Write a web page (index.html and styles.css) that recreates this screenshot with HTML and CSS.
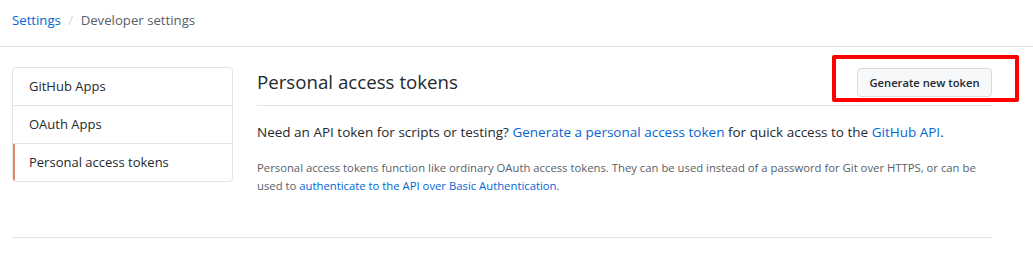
FILE: index.html
```html
<!DOCTYPE html>
<html lang="en">
<head>
  <meta charset="UTF-8">
  <title>Personal access tokens</title>
  <link rel="stylesheet" href="styles.css">
</head>
<body>
  <div class="header">
    <nav class="breadcrumb">
      <a href="#">Settings</a>
      <span class="sep">/</span>
      <span class="current">Developer settings</span>
    </nav>
  </div>

  <div class="layout">
    <ul class="menu">
      <li><a href="#">GitHub Apps</a></li>
      <li><a href="#">OAuth Apps</a></li>
      <li class="selected"><a href="#">Personal access tokens</a></li>
    </ul>

    <div class="main">
      <div class="subhead">
        <h2>Personal access tokens</h2>
        <div class="actions">
          <a href="#" class="btn">Generate new token</a>
          <span class="highlight"></span>
        </div>
      </div>
      <p class="lead">Need an API token for scripts or testing? <a href="#">Generate a personal access token</a> for quick access to the <a href="#">GitHub API</a>.</p>
      <p class="note">Personal access tokens function like ordinary OAuth access tokens. They can be used instead of a password for Git over HTTPS, or can be used to <a href="#">authenticate to the API over Basic Authentication</a>.</p>
    </div>
  </div>

  <div class="footer-rule"></div>
</body>
</html>
```

FILE: styles.css
```css
body {
  font-family: "Open Sans", "Noto Sans", sans-serif;
  font-size: 13.5px;
  margin: 0;
  color: #24292e;
  background: #fff;
}
a {
  color: #0366d6;
  text-decoration: none;
}
.header {
  border-bottom: 1px solid #e1e4e8;
  height: 47px;
  box-sizing: border-box;
  padding: 10px 12px 0;
}
.breadcrumb {
  font-size: 13.2px;
  line-height: 20px;
  color: #586069;
}
.breadcrumb .sep {
  color: #d1d5da;
  margin: 0 4px;
}
.layout {
  display: flex;
  gap: 24px;
  width: 980px;
  margin: 20px 12px 0;
}
.menu {
  list-style: none;
  margin: 0;
  padding: 0;
  width: 221px;
  flex-shrink: 0;
  align-self: flex-start;
  border: 1px solid #e1e4e8;
  border-radius: 4px;
  box-sizing: border-box;
  overflow: hidden;
  font-size: 13px;
}
.menu li {
  border-bottom: 1px solid #e1e4e8;
}
.menu li:last-child {
  border-bottom: 0;
}
.menu a {
  display: block;
  padding: 0 16px;
  height: 37px;
  line-height: 37px;
  color: #24292e;
}
.menu .selected a {
  border-left: 2px solid #e0876b;
  padding-left: 14px;
}
.main {
  flex: 1;
}
.subhead {
  display: flex;
  align-items: center;
  justify-content: space-between;
  border-bottom: 1px solid #e1e4e8;
  height: 39px;
  box-sizing: border-box;
  padding-bottom: 8px;
}
.subhead h2 {
  margin: 0;
  font-size: 18.7px;
  font-weight: 400;
  line-height: 30px;
}
.actions {
  position: relative;
}
.btn {
  display: inline-block;
  box-sizing: border-box;
  width: 135px;
  height: 29px;
  line-height: 27px;
  text-align: center;
  font-size: 11.2px;
  font-weight: 600;
  color: #24292e;
  background: #f6f8fa;
  border: 1px solid #d8dcdf;
  border-radius: 4px;
  vertical-align: middle;
}
.highlight {
  position: absolute;
  left: -25px;
  top: -13px;
  width: 187px;
  height: 47px;
  box-sizing: border-box;
  border: 4px solid #f00;
  border-radius: 2px;
}
.lead {
  margin: 15px 0 0;
  line-height: 22px;
}
.note {
  margin: 16px 0 0;
  padding-right: 10px;
  font-size: 11.3px;
  line-height: 18px;
  color: #586069;
}
.footer-rule {
  width: 980px;
  margin: 42px 12px 0;
  border-top: 1px solid #e1e4e8;
}
```
